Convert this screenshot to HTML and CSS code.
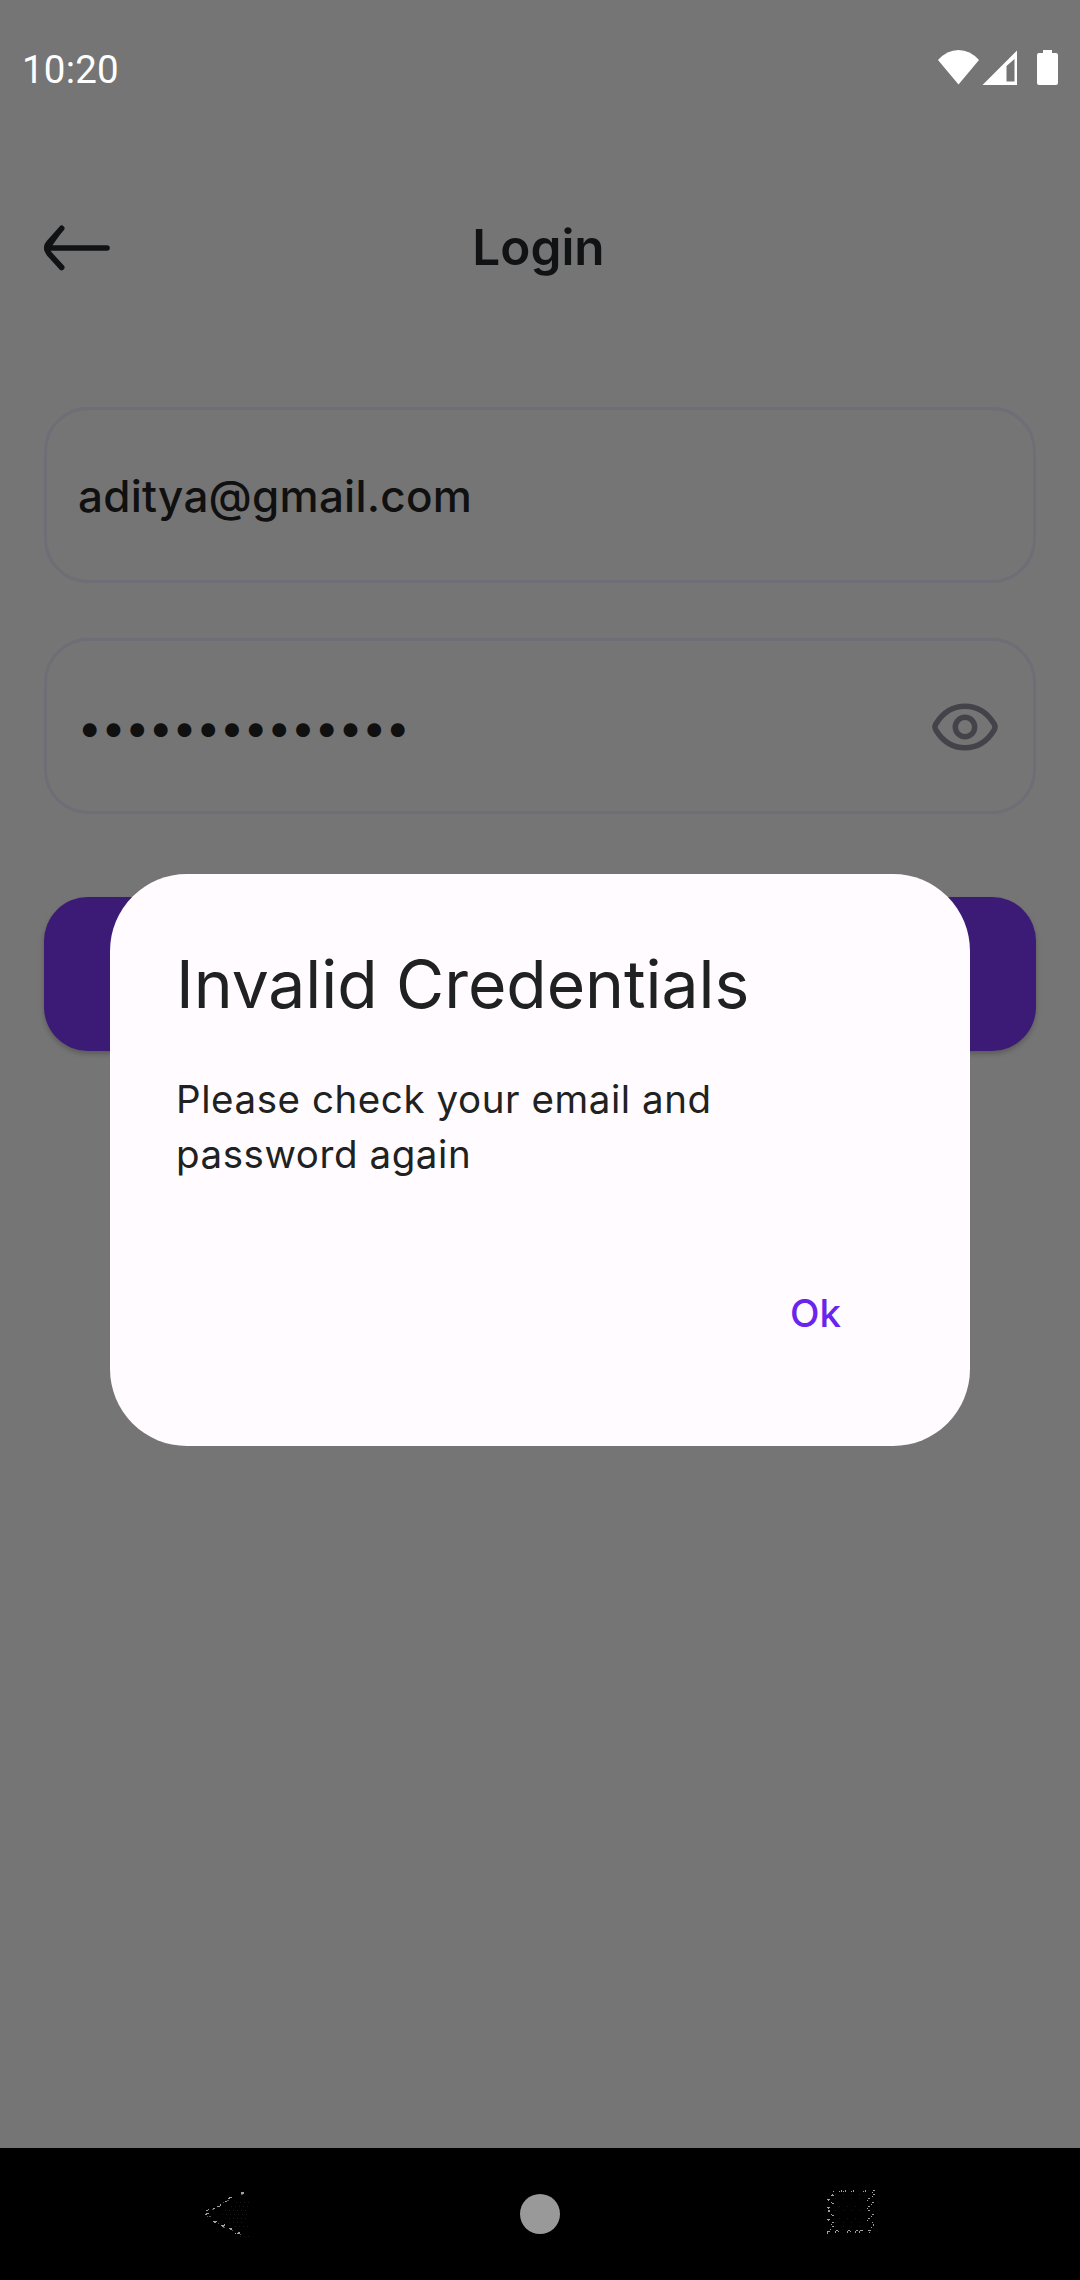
FILE: index.html
```html
<!DOCTYPE html>
<html lang="en">
<head>
<meta charset="utf-8">
<title>Login</title>
<link rel="stylesheet" href="styles.css">
</head>
<body>
<div class="screen">
  <header class="status">
    <span class="clock">10:20</span>
    <svg class="status-icons" width="122" height="36" viewBox="0 0 122 36" fill="#fff">
      <path d="M0 10Q9 0 20.500 0Q32 0 41 10L20.500 34.500Z"/>
      <path fill-rule="evenodd" d="M79 .5V35H44.500ZM76.500 9L68.500 16V31.500H76.500Z"/>
      <path d="M105 0H114V3H118Q120 3 120 5V33Q120 35 118 35H101Q99 35 99 33V5Q99 3 101 3H105Z"/>
    </svg>
  </header>
  <nav class="appbar">
    <svg class="back" width="66" height="46" viewBox="0 0 66 46" fill="none" stroke="#101213" stroke-linecap="round" stroke-linejoin="round">
      <path stroke-width="5.600" d="M6 23H63"/>
      <path stroke-width="5.600" d="M17.700 3.300L5 17.500Q.5 23 5 28.500L17.700 42.500"/>
      <path fill="#101213" stroke="none" d="M18.500 6L8 21L5 27L2 23L5 15Z"/>
    </svg>
    <h1 class="heading">Login</h1>
  </nav>
  <main class="form">
    <div class="field"><span class="value">aditya@gmail.com</span></div>
    <div class="field">
      <span class="value dots">••••••••••••••</span>
      <svg class="eye" width="66" height="48" viewBox="0 0 66 48" fill="none" stroke="#45434a" stroke-width="5.500">
        <path d="M4 20.800C10 11 20 3.300 33 3.300S56 11 62 20.800Q64 24 62 27.200C56 37 46 44.700 33 44.700S10 37 4 27.200Q2 24 4 20.800Z"/>
        <circle cx="33" cy="24" r="9.700"/>
      </svg>
    </div>
    <div class="button"></div>
  </main>
  <section class="dialog">
    <h2 class="title">Invalid Credentials</h2>
    <p class="message">Please check your email and password again</p>
    <div class="actions"><span class="ok">Ok</span></div>
  </section>
  <footer class="navbar">
    <svg width="54" height="54" viewBox="0 0 54 54" shape-rendering="crispEdges">
      <path fill="#a0a0a0" d="M39 5h3v2h-3zM27 10h3v1h-3zM26 11h2v1h-2zM23 14h2v1h-2zM18 17h1v2h-1zM15 19h3v1h-3zM11 21h2v1h-2zM4 23h2v1h-2zM6 22h1v1h-1zM4 26h3v1h-3zM3 27h2v1h-2zM11 34h4v1h-4zM12 35h2v1h-2zM19 38h3v1h-3zM20 39h2v1h-2zM22 37h1v2h-1zM27 41h3v1h-3zM28 42h2v1h-2zM33 46h1v1h-1zM35 46h3v1h-3zM36 45h2v1h-2z"/>
      <path fill="#555" d="M39 7h2v1h-2zM25 13h2v1h-2zM21 15h1v1h-1zM10 22h2v1h-2zM7 29h2v1h-2zM5 29h1v1h-1zM16 36h1v1h-1zM21 40h2v1h-2zM30 43h1v1h-1zM38 47h1v1h-1z"/>
      <path stroke="#181818" stroke-dasharray="1 3" d="M34 15.500H47M29 19.500H49M23 23.500H45M20 27.500H47M23 31.500H47M27 35.500H43M33 39.500H49M38 49.500H49"/>
    </svg>
    <span class="home"></span>
    <svg width="54" height="54" viewBox="0 0 54 54" shape-rendering="crispEdges">
      <path fill="#a0a0a0" d="M9 4h1v1h-1zM15 4h1v1h-1zM17 3h1v2h-1zM19 4h1v1h-1zM21 3h1v2h-1zM27 4h1v1h-1zM29 3h1v2h-1zM39 4h1v1h-1zM41 3h1v2h-1zM49 3h2v1h-2zM48 5h1v1h-1zM8 7h1v1h-1zM7 8h3v1h-3zM3 12h3v1h-3zM4 13h1v1h-1zM7 15h1v1h-1zM8 16h2v1h-2zM3 20h3v1h-3zM4 21h1v1h-1zM4 23h2v2h-2zM7 27h1v1h-1zM8 28h2v1h-2zM3 32h3v1h-3zM4 33h1v1h-1zM8 35h2v1h-2zM7 37h1v1h-1zM8 39h2v1h-2zM6 42h1v1h-1zM3 44h3v1h-3zM3 45h1v2h-1zM12 43h2v1h-2zM11 44h1v2h-1zM14 44h1v1h-1zM24 43h2v1h-2zM23 44h1v2h-1zM26 44h1v1h-1zM32 43h2v1h-2zM31 44h1v2h-1zM36 43h3v1h-3zM35 44h1v2h-1zM44 43h3v1h-3zM45 45h1v1h-1zM49 7h2v1h-2zM48 9h1v1h-1zM44 11h2v1h-2zM43 13h1v1h-1zM48 15h2v1h-2zM47 17h1v1h-1zM44 19h2v1h-2zM43 21h1v1h-1zM44 23h2v1h-2zM48 27h2v1h-2zM47 29h1v1h-1zM44 31h2v1h-2zM43 33h1v1h-1zM48 35h1v1h-1zM49 37h1v2h-1zM47 40h1v1h-1z"/>
      <path stroke="#181818" stroke-dasharray="1 7" d="M11 7.500H40M11 11.500H38M15 19.500H38M11 23.500H38M15 31.500H38M11 35.500H38M11 39.500H38"/>
    </svg>
  </footer>
</div>
</body>
</html>
```
FILE: styles.css
```css
* { box-sizing: border-box; }
body { margin: 0; background: #757575; font-family: Inter, "Noto Sans", sans-serif; }
.screen { position: relative; width: 1080px; height: 2280px; display: flex; flex-direction: column; overflow: hidden; background: #757575; }
.status { height: 132px; padding: 50px 20px 0 22px; display: flex; justify-content: space-between; align-items: flex-start; }
.clock { color: #fff; font: 38.5px/40px Roboto, sans-serif; letter-spacing: .2px; }
.status-icons { display: block; }
.appbar { height: 232px; padding: 0 44px; display: grid; grid-template-columns: 66px 1fr 66px; align-items: center; }
.heading { margin: 0; padding: 0 3px 2px 0; text-align: center; color: #101213; font-size: 49.5px; line-height: 60px; font-weight: 600; }
.form { flex: 1; padding: 43px 44px 0; display: flex; flex-direction: column; }
.field { height: 176px; margin-bottom: 55px; padding: 2px 35px 0 31px; border: 3px solid #6f6d75; border-radius: 44px; display: flex; align-items: center; justify-content: space-between; }
.value { color: #101010; font-size: 44px; line-height: 62px; font-weight: 500; letter-spacing: .24px; }
.button { height: 154px; margin-top: 28px; border-radius: 44px; background: #3b1b75; box-shadow: 0 3px 5px rgba(0,0,0,.22); }
.dialog { position: absolute; left: 110px; top: 873.5px; width: 860px; height: 572px; padding: 66px; border-radius: 77px; background: #fffbff; color: #202222; }
.title { margin: 0 0 44px; font-size: 66px; line-height: 88px; font-weight: 400; letter-spacing: -.06px; }
.message { margin: 0; width: 600px; font-size: 38.5px; line-height: 55px; letter-spacing: .57px; }
.actions { display: flex; justify-content: flex-end; padding: 104px 63px 0 0; }
.ok { color: #6b24ed; font-size: 38.5px; line-height: 55px; font-weight: 500; }
.navbar { height: 132px; padding: 0 202px; background: #000; display: flex; align-items: center; justify-content: space-between; }
.home { width: 40px; height: 40px; border-radius: 50%; background: #999; }
```
